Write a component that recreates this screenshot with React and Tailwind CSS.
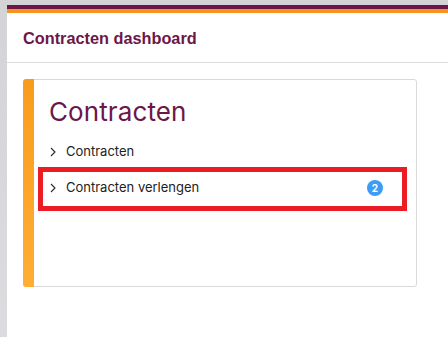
import React from "react";

function Chevron() {
  return (
    <svg width="8" height="10" viewBox="0 0 8 10" className="shrink-0">
      <polyline points="2,1 6,5 2,9" fill="none" stroke="#2a2a2a" strokeWidth="1.1" />
    </svg>
  );
}

export default function App() {
  return (
    <div className="w-[448px] h-[337px] overflow-hidden bg-gradient-to-b from-[#d4d4d6] to-[#dcdcde] pl-[7px] pt-[5px]">
      <div className="bg-white h-full">
        <div className="h-[4px] bg-[#6d1649]" />
        <div className="h-[4px] bg-[#f7941d]" />
        <div className="h-[50px] border-b border-[#dddddd] flex items-center pl-4">
          <h1 className="font-['Liberation_Sans',Arial,sans-serif] font-bold text-[16.3px] text-[#6d1649] mt-[1px]">
            Contracten dashboard
          </h1>
        </div>
        <div className="pl-4 pt-4">
          <div className="flex w-[394px] h-[208px] rounded-[3px] overflow-hidden">
            <div className="w-[11px] bg-gradient-to-b from-[#f99c1c] to-[#ffad33]" />
            <div className="flex-1 border-y border-r border-[#d9d9d9] rounded-r-[3px] font-['Inter',sans-serif]">
              <h2 className="text-[26px] text-[#6d1649] pl-[15px] pt-[14px] leading-[36px] tracking-[0.1px]">
                Contracten
              </h2>
              <div className="mt-[5px] pl-[15px] h-[34px] flex items-center gap-[9px] text-[13px] text-[#222]">
                <Chevron />
                <span>Contracten</span>
              </div>
              <div className="-mt-[2px] ml-[4px] mr-[9px] h-[44px] border-[5px] border-[#ec1c24] flex items-center pb-[3px] pl-[6px] pr-[19px] gap-[9px] text-[13px] text-[#222]">
                <Chevron />
                <span className="flex-1">Contracten verlengen</span>
                <span className="w-[16px] h-[16px] rounded-full bg-[#3d9cf5] text-white text-[10px] font-bold flex items-center justify-center leading-none">
                  2
                </span>
              </div>
            </div>
          </div>
        </div>
      </div>
    </div>
  );
}
